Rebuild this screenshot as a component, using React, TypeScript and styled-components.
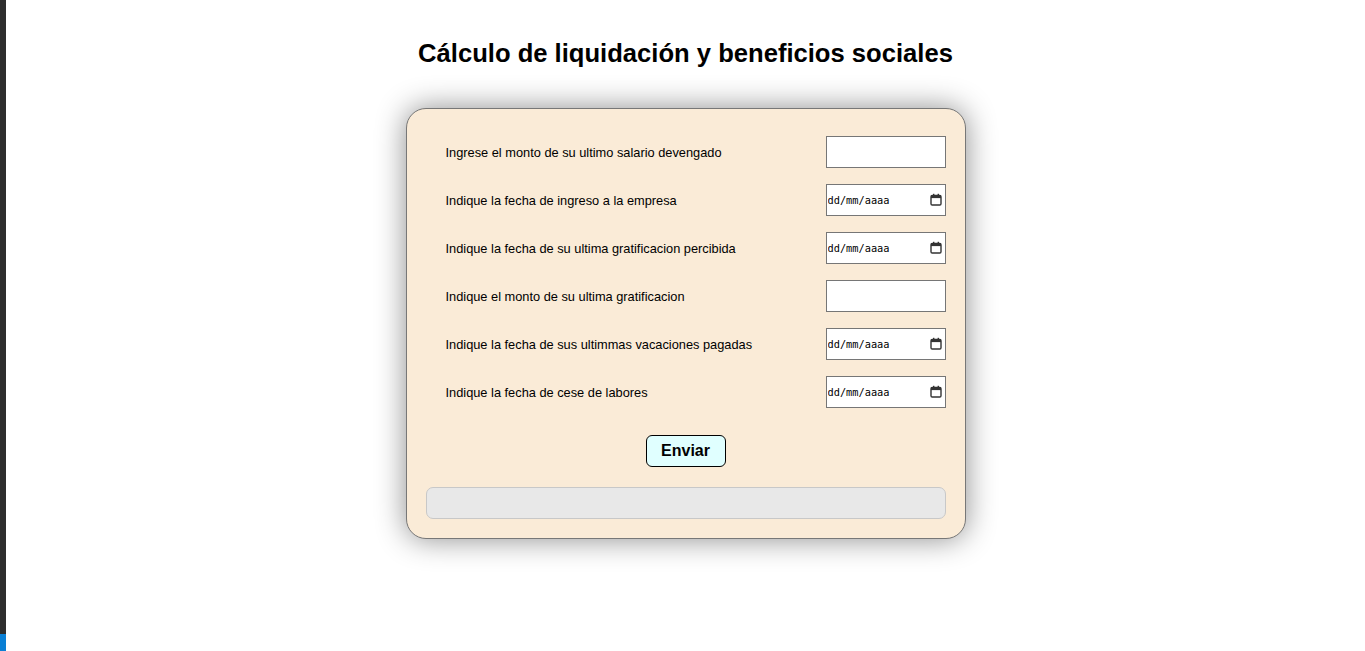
import React from "react";
import styled, { createGlobalStyle } from "styled-components";

const Global = createGlobalStyle`
  html, body { margin: 0; padding: 0; background: #ffffff; }
  body { font-family: "Liberation Sans", Arial, sans-serif; }
`;

const Shell = styled.div`
  display: flex;
  min-height: 651px;
`;

const SideStrip = styled.div`
  width: 6px;
  flex: none;
  display: flex;
  flex-direction: column;
  background: #2d2d2d;
`;

const StripFill = styled.div`
  flex: 1;
`;

const StripAccent = styled.div`
  height: 17px;
  background: #0a7fd4;
`;

const Main = styled.main`
  flex: 1;
  display: flex;
  flex-direction: column;
  align-items: center;
`;

const Title = styled.h1`
  margin: 40px 0 41px;
  font-size: 25.6px;
  line-height: 27px;
  font-weight: bold;
  color: #000;
`;

const Card = styled.form`
  box-sizing: border-box;
  width: 560px;
  padding: 27px 19px 19px;
  background: #faebd7;
  border: 1px solid #777;
  border-radius: 20px;
  box-shadow: 0 0 30px rgba(0, 0, 0, 0.45);
  display: flex;
  flex-direction: column;
  align-items: center;
`;

const Fields = styled.div`
  width: 100%;
  display: flex;
  flex-direction: column;
  gap: 16px;
`;

const Row = styled.div`
  display: flex;
  align-items: center;
  justify-content: space-between;
  padding-left: 20px;
`;

const Label = styled.label`
  font-size: 12.8px;
  color: #000;
`;

const Field = styled.input`
  box-sizing: border-box;
  width: 120px;
  height: 32px;
  margin: 0;
  padding: 1px 2px;
  border: 1px solid #767676;
  background: #fff;
`;

const DateBox = styled.div`
  position: relative;
  width: 120px;
  height: 32px;
`;

const DateInput = styled(Field)`
  font-family: "DejaVu Sans Mono", "Liberation Mono", monospace;
  font-size: 10.3px;
  color: #000;
  padding: 1px 1px;
  &::placeholder {
    color: #000;
    opacity: 1;
  }
`;

const CalendarIcon = styled.svg`
  position: absolute;
  right: 4px;
  top: 9px;
  width: 12px;
  height: 13px;
  pointer-events: none;
`;

const Submit = styled.button`
  box-sizing: border-box;
  margin-top: 27px;
  width: 80px;
  height: 32px;
  background: #e0ffff;
  border: 1px solid #000;
  border-radius: 6px;
  font-family: "Liberation Sans", Arial, sans-serif;
  font-size: 16px;
  font-weight: bold;
  color: #000;
  padding: 0;
`;

const Result = styled.div`
  box-sizing: border-box;
  margin-top: 20px;
  width: 100%;
  height: 32px;
  background: #e8e8e8;
  border: 1px solid #c8c8c8;
  border-radius: 7px;
`;

const fields: { label: string; type: string }[] = [
  { label: "Ingrese el monto de su ultimo salario devengado", type: "text" },
  { label: "Indique la fecha de ingreso a la empresa", type: "date" },
  { label: "Indique la fecha de su ultima gratificacion percibida", type: "date" },
  { label: "Indique el monto de su ultima gratificacion", type: "text" },
  { label: "Indique la fecha de sus ultimmas vacaciones pagadas", type: "date" },
  { label: "Indique la fecha de cese de labores", type: "date" },
];

function DateField({ id }: { id: string }) {
  return (
    <DateBox>
      <DateInput id={id} type="text" placeholder="dd/mm/aaaa" />
      <CalendarIcon viewBox="0 0 12 13">
        <rect x="1" y="2.5" width="10" height="9.5" rx="1.2" fill="none" stroke="#333" strokeWidth="1.4" />
        <rect x="1" y="2.5" width="10" height="2.6" fill="#333" />
        <rect x="3" y="0.8" width="1.4" height="2.4" fill="#333" />
        <rect x="7.6" y="0.8" width="1.4" height="2.4" fill="#333" />
      </CalendarIcon>
    </DateBox>
  );
}

export default function App() {
  return (
    <>
      <Global />
      <Shell>
        <SideStrip>
          <StripFill />
          <StripAccent />
        </SideStrip>
        <Main>
          <Title>Cálculo de liquidación y beneficios sociales</Title>
          <Card onSubmit={(e) => e.preventDefault()}>
            <Fields>
              {fields.map((f, i) => (
                <Row key={i}>
                  <Label htmlFor={`f${i}`}>{f.label}</Label>
                  {f.type === "date" ? <DateField id={`f${i}`} /> : <Field id={`f${i}`} type="text" />}
                </Row>
              ))}
            </Fields>
            <Submit type="submit">Enviar</Submit>
            <Result />
          </Card>
        </Main>
      </Shell>
    </>
  );
}
